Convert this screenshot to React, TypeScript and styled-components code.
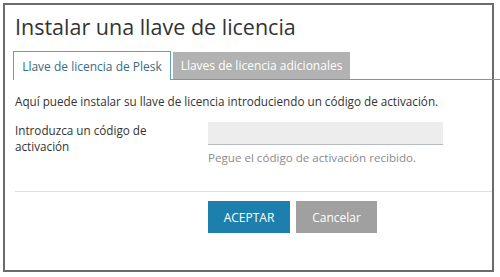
import styled, { createGlobalStyle } from "styled-components";

const GlobalStyle = createGlobalStyle`
  html, body {
    margin: 0;
    padding: 0;
    background: #fff;
  }
  body {
    font-family: "Open Sans", "Liberation Sans", sans-serif;
    color: #333;
  }
`;

const Dialog = styled.div`
  box-sizing: border-box;
  width: 491px;
  height: 269px;
  margin: 3px 0 0 3px;
  padding: 0 10px;
  border: 2px solid #6b6b6b;
  background: #fff;
`;

const Title = styled.h1`
  margin: 0;
  padding-top: 8px;
  font-size: 21.5px;
  font-weight: 400;
  line-height: 28px;
  color: #333;
`;

const TabStrip = styled.div`
  display: flex;
  align-items: flex-end;
  gap: 2px;
  height: 28px;
  margin: 10px -18px 0 -2px;
  border-bottom: 1px solid #5ea3b8;
  position: relative;
`;

const Tab = styled.div<{ $active?: boolean }>`
  box-sizing: border-box;
  display: flex;
  align-items: center;
  justify-content: center;
  font-size: 12px;
  white-space: nowrap;
  ${(p) =>
    p.$active
      ? `
    width: 158px;
    height: 29px;
    margin-bottom: -1px;
    background: #fff;
    color: #3a6b82;
    border: 1px solid #5ea3b8;
    border-bottom: none;
  `
      : `
    width: 177px;
    height: 27px;
    background: #b2b2b2;
    color: #fff;
  `}
`;

const Description = styled.p`
  margin: 12px 0 0;
  font-size: 11.7px;
  line-height: 18px;
`;

const FormRow = styled.div`
  display: flex;
  margin-top: 12px;
`;

const Label = styled.label`
  box-sizing: border-box;
  flex: 0 0 193px;
  padding-right: 40px;
  font-size: 11.7px;
  line-height: 16px;
`;

const Field = styled.div`
  display: flex;
  flex-direction: column;
`;

const Input = styled.input`
  box-sizing: border-box;
  width: 235px;
  height: 23px;
  margin: 0;
  padding: 0 6px;
  border: none;
  border-bottom: 1px solid #b6bcc2;
  background: #ededed;
  outline: none;
  font: inherit;
`;

const Hint = styled.div`
  margin-top: 5px;
  font-size: 11.6px;
  line-height: 16px;
  color: #8a8a8a;
`;

const Separator = styled.hr`
  margin: 25px -10px 0 0;
  border: none;
  border-top: 1px solid #dedede;
`;

const ButtonRow = styled.div`
  display: flex;
  gap: 6px;
  margin-top: 9px;
  padding-left: 193px;
`;

const Button = styled.button<{ $primary?: boolean }>`
  box-sizing: border-box;
  width: ${(p) => (p.$primary ? "82px" : "81px")};
  height: 32px;
  border: none;
  padding: 0;
  font-family: "Open Sans", "Liberation Sans", sans-serif;
  font-size: 12px;
  color: #fff;
  background: ${(p) => (p.$primary ? "#1d7fab" : "#a0a0a0")};
  cursor: pointer;
`;

export default function App() {
  return (
    <>
      <GlobalStyle />
      <Dialog>
        <Title>Instalar una llave de licencia</Title>
        <TabStrip>
          <Tab $active>Llave de licencia de Plesk</Tab>
          <Tab>Llaves de licencia adicionales</Tab>
        </TabStrip>
        <Description>
          Aquí puede instalar su llave de licencia introduciendo un código de activación.
        </Description>
        <FormRow>
          <Label htmlFor="code">Introduzca un código de activación</Label>
          <Field>
            <Input id="code" type="text" />
            <Hint>Pegue el código de activación recibido.</Hint>
          </Field>
        </FormRow>
        <Separator />
        <ButtonRow>
          <Button $primary>ACEPTAR</Button>
          <Button>Cancelar</Button>
        </ButtonRow>
      </Dialog>
    </>
  );
}
